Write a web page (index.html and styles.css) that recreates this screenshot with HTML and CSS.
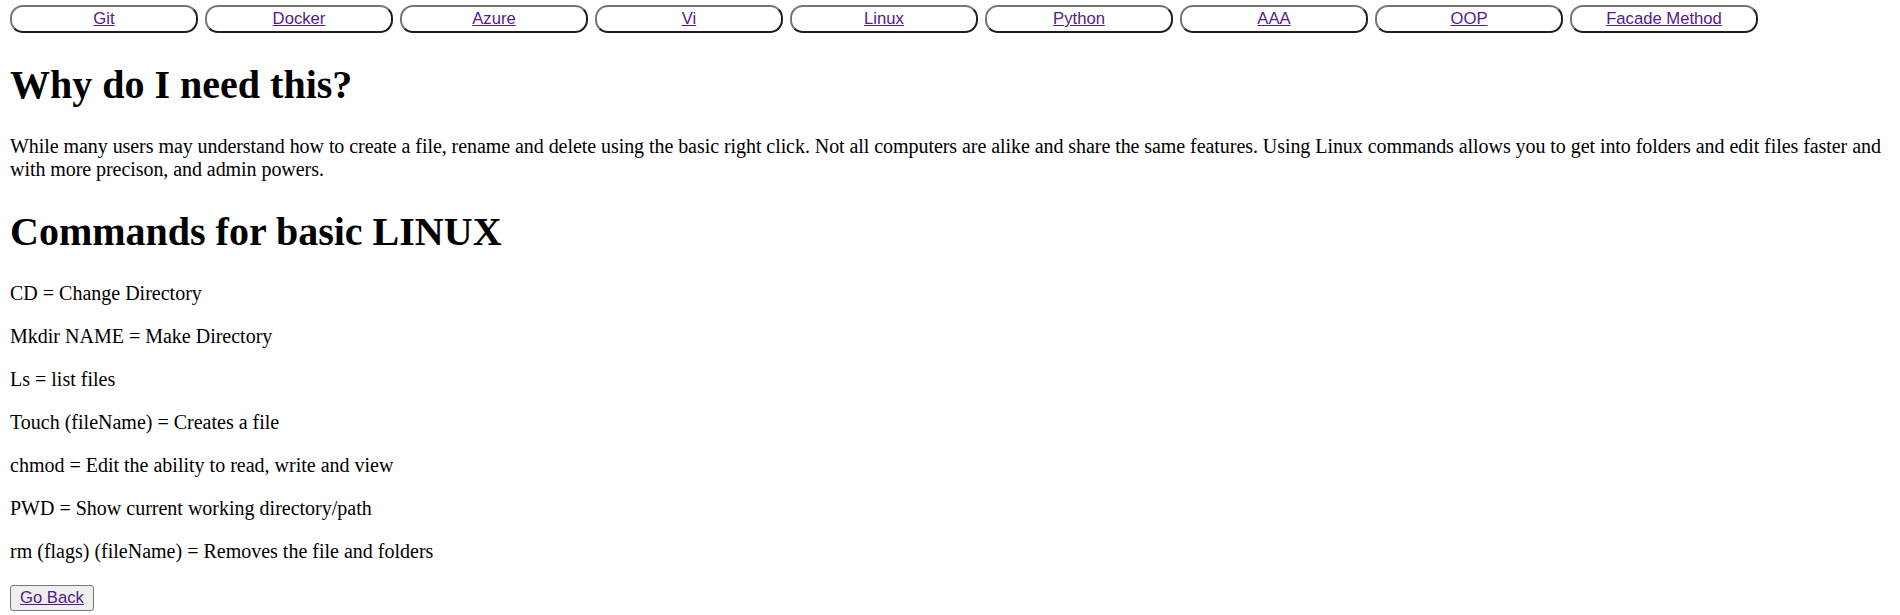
FILE: index.html
```html
<!DOCTYPE html>
<html lang="en">
<head>
<meta charset="utf-8">
<title>Linux</title>
<link rel="stylesheet" href="styles.css">
</head>
<body>
<nav class="topnav">
  <div class="nav-btn"><a class="nav-link" href="#">Git</a></div>
  <div class="nav-btn"><a class="nav-link" href="#">Docker</a></div>
  <div class="nav-btn"><a class="nav-link" href="#">Azure</a></div>
  <div class="nav-btn"><a class="nav-link" href="#">Vi</a></div>
  <div class="nav-btn"><a class="nav-link" href="#">Linux</a></div>
  <div class="nav-btn"><a class="nav-link" href="#">Python</a></div>
  <div class="nav-btn"><a class="nav-link" href="#">AAA</a></div>
  <div class="nav-btn"><a class="nav-link" href="#">OOP</a></div>
  <div class="nav-btn"><a class="nav-link" href="#">Facade Method</a></div>
</nav>
<h1 class="title">Why do I need this?</h1>
<p class="text intro">While many users may understand how to create a file, rename and delete using the basic right click. Not all computers are alike and share the same features. Using Linux commands allows you to get into folders and edit files faster and with more precison, and admin powers.</p>
<h1 class="title">Commands for basic LINUX</h1>
<p class="text">CD = Change Directory</p>
<p class="text">Mkdir NAME = Make Directory</p>
<p class="text">Ls = list files</p>
<p class="text">Touch (fileName) = Creates a file</p>
<p class="text">chmod = Edit the ability to read, write and view</p>
<p class="text">PWD = Show current working directory/path</p>
<p class="text">rm (flags) (fileName) = Removes the file and folders</p>
<div class="actions">
  <button class="back-btn" type="button"><a class="nav-link" href="#">Go Back</a></button>
</div>
</body>
</html>
```

FILE: styles.css
```css
html, body {
  background: #ffffff;
}

body {
  margin: 0;
  padding: 5px 10px 10px;
  font-family: "Liberation Serif", "Times New Roman", serif;
  font-size: 20px;
  color: #000000;
}

.topnav {
  display: flex;
  gap: 7px;
  padding-bottom: 1.4px;
}

.nav-btn {
  box-sizing: border-box;
  width: 188px;
  height: 28px;
  border-width: 2px;
  border-style: solid;
  border-color: #767676 #1e1e1e #1e1e1e #767676;
  border-radius: 13px;
  background: #ffffff;
  display: flex;
  align-items: center;
  justify-content: center;
  font-family: "Liberation Sans", Arial, sans-serif;
  font-size: 16.67px;
}

.nav-link {
  color: #551a8b;
  text-decoration: underline;
}

.title {
  font-size: 40px;
  font-weight: bold;
  margin: 26.8px 0;
}

.text {
  margin: 20px 0;
}

.intro {
  letter-spacing: -0.06px;
}

.actions {
  display: flex;
}

.back-btn {
  margin-top: 2px;
  padding: 2px 9px;
  border: 1px solid #767676;
  border-radius: 3px;
  background: #efefef;
  font-family: "Liberation Sans", Arial, sans-serif;
  font-size: 16.67px;
  line-height: normal;
}
```
